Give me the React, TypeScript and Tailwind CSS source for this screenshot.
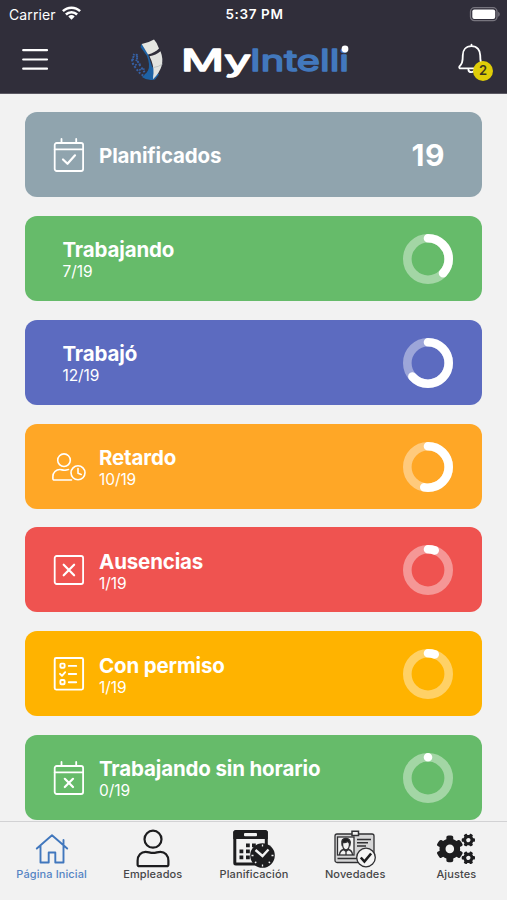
import type { ReactNode } from 'react'
import { FaCogs } from 'react-icons/fa';

interface Status {
    title: string;
    count: number;
    color: string;
    icon?: ReactNode;
}

const TOTAL = 19;

const CalendarIcon = ({ children }: { children: ReactNode }) => (
    <svg width="34" height="36" viewBox="0 0 34 36" fill="none" stroke="white" strokeWidth="1.8" strokeLinecap="round" strokeLinejoin="round">
        <rect x="2.7" y="6" width="28.4" height="28" rx="2" />
        <path d="M2.7 12.4H31.1M9.5 2v4M24.2 2v4" />
        {children}
    </svg>
);

const LateIcon = () => (
    <svg width="34" height="36" viewBox="0 0 34 36" fill="none" stroke="white" strokeWidth="1.6" strokeLinecap="round" strokeLinejoin="round">
        <circle cx="12" cy="11.2" r="6.3" />
        <path d="M19.5 31H2.2a1.3 1.3 0 0 1-1.3-1.3v-2.2a7 7 0 0 1 7-7c1.6 0 2.5.8 4.3.8 1.7 0 2.7-.8 4.3-.8" />
        <circle cx="26" cy="23.8" r="7" />
        <path d="M26 19.5v4.7l3.2 1.3" />
    </svg>
);

const AbsentIcon = () => (
    <svg width="34" height="36" viewBox="0 0 34 36" fill="none" stroke="white" strokeWidth="1.8" strokeLinecap="round">
        <rect x="2.7" y="4" width="28.4" height="28" rx="2" />
        <path d="M11.7 12.7l10.4 10.6M22.1 12.7L11.7 23.3" strokeWidth="2.2" />
    </svg>
);

const PermitIcon = () => (
    <svg width="34" height="36" viewBox="0 0 34 36" fill="none" stroke="white" strokeWidth="1.9" strokeLinecap="round" strokeLinejoin="round">
        <rect x="2.7" y="2" width="28.4" height="31.6" rx="1.5" />
        <rect x="8.4" y="7.6" width="4.2" height="4.2" rx="1" />
        <rect x="8.4" y="24" width="4.2" height="4.2" rx="1" />
        <path d="M8 17.8l2 2 3.2-3.6M16.8 9.9h7.4M16.8 18h7.4M16.8 26.2h7.4" />
    </svg>
);

const statuses: Status[] = [
    { title: 'Trabajando', count: 7, color: 'bg-[#66bb6a]' },
    { title: 'Trabajó', count: 12, color: 'bg-[#5c6bc0]' },
    { title: 'Retardo', count: 10, color: 'bg-[#ffa726]', icon: <LateIcon /> },
    { title: 'Ausencias', count: 1, color: 'bg-[#ef5350]', icon: <AbsentIcon /> },
    { title: 'Con permiso', count: 1, color: 'bg-[#ffb300]', icon: <PermitIcon /> },
    { title: 'Trabajando sin horario', count: 0, color: 'bg-[#66bb6a]', icon: <CalendarIcon><path d="M12.8 18.8l8.2 8.2M21 18.8l-8.2 8.2" strokeWidth="2.2" /></CalendarIcon> },
];

const Ring = ({ value }: { value: number }) => {
    const length = 2 * Math.PI * 20.7;
    return (
        <svg width="50" height="50" viewBox="0 0 50 50" fill="none" stroke="white" strokeWidth="8.6">
            <circle cx="25" cy="25" r="20.7" strokeOpacity="0.4" />
            <circle
                cx="25"
                cy="25"
                r="20.7"
                strokeLinecap="round"
                strokeDasharray={`${Math.max(length * value, 0.01)} ${length}`}
                transform="rotate(-90 25 25)"
            />
        </svg>
    );
};

const StatusCard = ({ status }: { status: Status }) => (
    <div className={`flex h-[85px] shrink-0 items-center rounded-xl pt-px pr-[29.5px] text-white ${status.color} ${status.icon ? 'pl-[26.5px]' : 'pl-[37.5px]'}`}>
        {status.icon && <div className="mr-[13.5px]">{status.icon}</div>}
        <div className="flex-1 whitespace-nowrap pt-[5px]">
            <h3 className="text-[20.5px] leading-[22px] font-bold tracking-[-0.15px]">{status.title}</h3>
            <p className="text-[15.5px] leading-[22px] tracking-[-0.1px]">{status.count}/{TOTAL}</p>
        </div>
        <Ring value={status.count / TOTAL} />
    </div>
);

const StatusBar = () => (
    <div className="grid h-7 grid-cols-3 items-center pr-[7px] pl-[9px] text-[14px] text-white">
        <div className="flex items-center gap-1.5">
            <span className="tracking-[0.1px]">Carrier</span>
            <svg className="mb-[2px]" width="19" height="14" viewBox="0 0 19 14" fill="none" stroke="white" strokeWidth="2.5">
                <path d="M.9 5.2a12.2 12.2 0 0 1 17.2 0" />
                <path d="M3.9 8.5a8 8 0 0 1 11.2 0" />
                <path d="M9.5 13.8L6.3 10.5a4.7 4.7 0 0 1 6.4 0z" fill="white" stroke="none" />
            </svg>
        </div>
        <span className="text-center text-[13.5px] font-semibold tracking-[0.6px]">5:37 PM</span>
        <svg className="justify-self-end" width="31" height="15" viewBox="0 0 31 15">
            <rect x="1.5" y="0.7" width="26.5" height="13" rx="4" fill="none" stroke="#77757e" strokeWidth="1.3" />
            <rect x="3.3" y="2.5" width="22.9" height="9.4" rx="2" fill="white" />
            <path d="M29.2 4.7v5c2-.8 2-4.2 0-5z" fill="#77757e" />
        </svg>
    </div>
);

const Logo = () => (
    <svg width="222" height="50" viewBox="0 0 222 50">
        <g fill="none" stroke="#3560a4" strokeWidth="2" strokeDasharray="2 1.7">
            <path d="M5 20C2 24 3 27 6 31s5 7 9 9" />
            <path d="M8 16C7 23 9 27 12 31s4 6 5 8" strokeDashoffset="2" />
            <path d="M4 18l5 3M3 23l6 2M6 29l6-1M10 34l6-1" strokeWidth="1.4" />
        </g>
        <path d="M12.7 7.8L11.500 11 18 20q3.500 9 1 14.500Q17.500 38 13 41q6 4.500 13 2.500l4-5-7-8L19 18z" fill="#1d62a5" />
        <path d="M12.7 8Q19 7 25 3.5q3 3 5 9-4 4-11 6z" fill="#e5e6e1" />
        <path d="M20.500 20.200q6.500-1 11-5 6 15-7.500 28 0-3 .5-6 .5-8-4-17z" fill="#e1e2df" />
        <path d="M24.500 31.500q5-.5 9-3.500" stroke="#bfc4c4" strokeWidth="1" fill="none" />
        <g fontFamily="Inter, sans-serif" fontSize="29.5" fontWeight="400" strokeLinejoin="round">
            <text x="52" y="35.2" fill="white" stroke="white" strokeWidth="1.5" textLength="70" lengthAdjust="spacingAndGlyphs">My</text>
            <text x="121" y="35.2" fill="#4278bd" stroke="#4278bd" strokeWidth="1.5" textLength="99" lengthAdjust="spacingAndGlyphs">Intelli</text>
        </g>
        <circle cx="216" cy="13" r="3.4" fill="white" />
    </svg>
);

const Header = () => (
    <header className="h-[94px] shrink-0 border-b border-[#5b5963] bg-[#302e3a]">
        <StatusBar />
        <div className="flex h-[65px] items-center pr-[14px] pl-[22px]">
            <svg className="mb-[2px]" width="27" height="24" viewBox="0 0 27 24" stroke="white" strokeWidth="2.2" strokeLinecap="round">
                <path d="M1.2 2.2h23.8M1.2 11.5h23.8M1.2 20.7h23.8" />
            </svg>
            <div className="ml-20">
                <Logo />
            </div>
            <div className="relative mt-[2px] ml-auto h-[38px] w-9">
                <svg width="29" height="33" viewBox="0 0 30 34" fill="none" stroke="white" strokeWidth="1.9" strokeLinecap="round" strokeLinejoin="round">
                    <path d="M15 3.2v-1.5M15 3.2c-6 0-9 4.3-9 9.5 0 7-1 8.8-3.4 11.3-.8 1 0 2.2 1.1 2.2h22.6c1.1 0 1.9-1.2 1.1-2.2C25 21.5 24 19.7 24 12.7c0-5.2-3-9.5-9-9.5z" />
                    <path d="M11.8 27.5c.2 3.5 5.800 3.500 6.400 0" />
                </svg>
                <span className="absolute top-[18px] left-[16px] flex size-5 items-center justify-center rounded-full bg-[#dfcd08] text-[13px] font-semibold text-[#38351f]">2</span>
            </div>
        </div>
    </header>
);

const HomeIcon = () => (
    <svg width="34" height="32" viewBox="0 0 34 32" fill="none" stroke="#4177bd" strokeWidth="1.9" strokeLinecap="round" strokeLinejoin="round">
        <path d="M1.8 15.5L17 2.2l15.2 13.3M5.5 13v16.5h8.2V19.5h6.6v10h8.2V13M28.5 11.5V7" />
    </svg>
);

const PersonIcon = () => (
    <svg width="34" height="39" viewBox="0 0 34 39" fill="none" stroke="#1d1d1f" strokeWidth="2.2" strokeLinejoin="round">
        <circle cx="17" cy="10.2" r="8.5" />
        <path d="M3.3 37.1h27.4q1.700 0 1.700-1.700v-3.600c0-5.500-3.500-9-8-9-2.700 0-4.400 1.100-7.400 1.100s-4.700-1.100-7.400-1.100c-4.500 0-8 3.500-8 9v3.600q0 1.700 1.700 1.700z" />
    </svg>
);

const PlanningIcon = () => (
    <svg width="42" height="38" viewBox="0 0 42 38">
        <rect x="1.8" y="1.5" width="31.5" height="32.5" rx="1" fill="#f2f2f2" stroke="#1d1d1f" strokeWidth="3" />
        <path d="M.3 2.5Q.3.5 2.3.5h30.500q2 0 2 2V9H.3z" fill="#1d1d1f" />
        <rect x="11" y="3" width="13" height="3.2" rx="1" fill="#f2f2f2" />
        <path d="M13 13.500h3.800v3.800H13zM19 13.500h3.800v3.800H19zM6.500 19.500h3.800v3.800H6.500zM13 19.500h3.800v3.800H13zM6.500 25.500h3.800v3.800H6.500zM13 25.500h3.800v3.800H13z" fill="#1d1d1f" />
        <circle cx="29.5" cy="25.5" r="12.3" fill="#1d1d1f" />
        <path d="M22.5 20l7 6 6-6.5" fill="none" stroke="#f2f2f2" strokeWidth="2.4" />
        <path d="M29.500 14.500v2M29.500 34.500v2M18.500 25.500h2M38.500 25.500h2M22 33l1.300-1.300M37 33l-1.300-1.300" stroke="#f2f2f2" strokeWidth="1.3" />
    </svg>
);

const BadgeIcon = () => (
    <svg width="42" height="38" viewBox="0 0 42 38" fill="none" stroke="#303033" strokeWidth="1.3">
        <rect x="1" y="4" width="39" height="28.5" rx="2" fill="#d6d6d7" />
        <rect x="3.5" y="7" width="16.5" height="18" fill="#f2f2f2" />
        <path d="M5.500 25q.3-4.500 4-5.500l2.500 2 2.500-2q3.700 1 4 5.500M12 21.500V25M8.500 13.500q0 6 3.500 6.500 3.500-.5 3.500-6.500" />
        <path d="M8 14.5C7 10 9 8.3 12 8.5s5 1.5 4 6q-1-2.3-2.5-3-2 1.5-4.5 1z" fill="#1d1d1f" />
        <path d="M23 9.5h14M23 12.8h11M23 16h9M3.5 28.5h19.5" strokeWidth="1.5" />
        <path d="M18 1.2h6.5v4.3H18z" fill="#f2f2f2" strokeWidth="1.5" />
        <circle cx="32" cy="27.5" r="9.3" fill="#f5f5f5" />
        <path d="M26.8 27.5l3.6 4 6.7-8" stroke="#1d1d1f" strokeWidth="2.6" />
    </svg>
);

const tabs = [
    { label: 'Página Inicial', icon: <HomeIcon />, active: true },
    { label: 'Empleados', icon: <PersonIcon /> },
    { label: 'Planificación', icon: <PlanningIcon /> },
    { label: 'Novedades', icon: <BadgeIcon /> },
    { label: 'Ajustes', icon: <FaCogs size={38} color="#1d1d1f" /> },
];

const TabBar = () => (
    <nav className="grid h-[79px] shrink-0 grid-cols-5 border-t border-[#d2d2d4] bg-[#f2f2f2] pl-px">
        {tabs.map((tab) => (
            <div key={tab.label} className="flex flex-col items-center pt-[7px]">
                <div className="flex h-[39px] items-center justify-center">{tab.icon}</div>
                <span className={`text-[11px] leading-[12px] font-medium whitespace-nowrap tracking-[0.1px] ${tab.active ? 'text-[#5584c4]' : 'text-[#464648]'}`}>{tab.label}</span>
            </div>
        ))}
    </nav>
);

const App = () => {
    return (
        <div className="flex h-[900px] w-[507px] flex-col overflow-hidden bg-[#f2f2f2] font-['Inter',sans-serif]">
            <Header />
            <main className="flex flex-1 flex-col gap-[18.8px] overflow-hidden px-[25px] pt-[18.2px]">
                <div className="flex h-[85px] shrink-0 items-center rounded-xl bg-[#90a4ae] pt-px pr-[37px] pl-[26.5px] text-white">
                    <div className="mr-[13.5px]">
                        <CalendarIcon><path d="M11 22.5l4.5 4.3 7.5-8.5" strokeWidth="2.2" /></CalendarIcon>
                    </div>
                    <h3 className="flex-1 pt-px text-[20.5px] leading-[22px] font-bold tracking-[-0.15px]">Planificados</h3>
                    <span className="text-[30px] font-bold tracking-[0.5px]">{TOTAL}</span>
                </div>
                {statuses.map((status) => (
                    <StatusCard key={status.title} status={status} />
                ))}
            </main>
            <TabBar />
        </div>
    )
}

export default App
